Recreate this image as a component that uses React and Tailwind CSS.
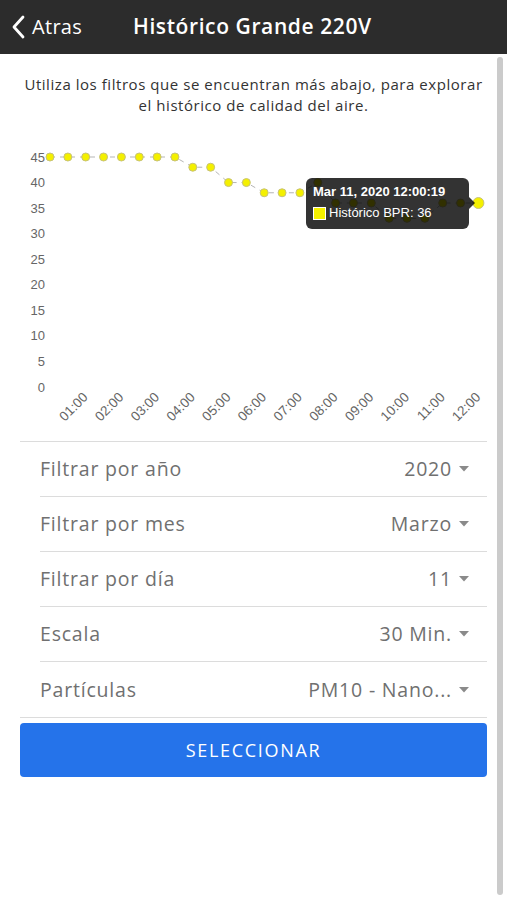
import React from "react";

const values = [45, 45, 45, 45, 45, 45, 45, 45, 43, 43, 40, 40, 38, 38, 38, 40, 36, 36, 36, 33, 33, 33, 36, 36, 36];
const hours = ["01:00", "02:00", "03:00", "04:00", "05:00", "06:00", "07:00", "08:00", "09:00", "10:00", "11:00", "12:00"];

const px = (i) => 50 + i * 17.85;
const py = (v) => 387 - v * (230 / 45);

const filters = [
  { label: "Filtrar por año", value: "2020" },
  { label: "Filtrar por mes", value: "Marzo" },
  { label: "Filtrar por día", value: "11" },
  { label: "Escala", value: "30 Min." },
  { label: "Partículas", value: "PM10 - Nano..." },
];

function Caret() {
  return (
    <svg width="10" height="6" viewBox="0 0 10 6" className="ml-[7px] shrink-0">
      <path d="M0 0 L10 0 L5 5.5 Z" fill="#8a8a8a" />
    </svg>
  );
}

function Chart() {
  const line = values.map((v, i) => `${i === 0 ? "M" : "L"}${px(i)} ${py(v)}`).join(" ");
  return (
    <div className="relative h-[290px]">
      <svg width="467" height="290" viewBox="20 140 467 290" style={{ fontFamily: '"Liberation Sans", Arial, sans-serif' }}>
        {[0, 5, 10, 15, 20, 25, 30, 35, 40, 45].map((t) => (
          <text key={t} x="45" y={py(t) + 4.5} textAnchor="end" fontSize="13" fill="#666">
            {t}
          </text>
        ))}
        <path d={line} fill="none" stroke="#b5b5b5" strokeWidth="1" strokeDasharray="5 5" />
        {values.map((v, i) => (
          <circle
            key={i}
            cx={px(i)}
            cy={py(v)}
            r={i === values.length - 1 ? 5.5 : 4}
            fill="#f4f000"
            stroke="#c7c27a"
            strokeWidth="1"
          />
        ))}
        {hours.map((h, k) => {
          const x = px(2 * (k + 1)) + 3;
          const y = 398;
          return (
            <text key={h} x={x} y={y} textAnchor="end" fontSize="13.5" fill="#666" transform={`rotate(-45 ${x} ${y})`}>
              {h}
            </text>
          );
        })}
      </svg>
      <div
        className="absolute left-[286px] top-[38px] w-[163px] h-[51px] rounded-[6px] bg-black/80 pl-[7px] pt-[5px] text-white"
        style={{ fontFamily: '"Liberation Sans", Arial, sans-serif' }}
      >
        <div className="text-[13px] font-bold leading-[18px]">Mar 11, 2020 12:00:19</div>
        <div className="flex items-center mt-[3px] text-[13px] leading-[18px]">
          <span className="w-[13px] h-[13px] bg-[#f4f000] border border-white mr-[3px]" />
          Histórico BPR: 36
        </div>
        <div className="absolute right-[-6px] top-[19px] w-0 h-0 border-y-[6px] border-y-transparent border-l-[6px] border-l-black/80" />
      </div>
    </div>
  );
}

export default function App() {
  return (
    <div className="relative w-[507px] h-[900px] bg-white overflow-hidden" style={{ fontFamily: '"Open Sans", sans-serif' }}>
      <header className="h-[54px] bg-[#2c2c2c] flex items-center text-white">
        <div className="flex items-center pl-[11px] w-[133px]">
          <svg width="14" height="24" viewBox="0 0 14 24">
            <path d="M12 2 L3 12 L12 22" fill="none" stroke="white" strokeWidth="2.8" strokeLinecap="round" strokeLinejoin="round" />
          </svg>
          <span className="ml-[7px] text-[20px] tracking-[0.3px] leading-none">Atras</span>
        </div>
        <h1 className="text-[21px] font-semibold tracking-[0.6px]">Histórico Grande 220V</h1>
      </header>

      <main className="px-5">
        <p className="pt-[20px] text-center text-[15px] leading-[21px] tracking-[0.55px] text-[#333]">
          Utiliza los filtros que se encuentran más abajo, para explorar
          <br />
          el histórico de calidad del aire.
        </p>

        <div className="mt-[24px]">
          <Chart />
        </div>

        <div className="mt-[11px] border-t border-[#dcdcdc]">
          {filters.map((f, i) => (
            <div key={f.label} className={`ml-5 h-[55px] flex items-center pr-[18px] ${i < filters.length - 1 ? "border-b border-[#dcdcdc]" : ""}`}>
              <span className="text-[19.5px] tracking-[0.8px] text-[#707070]">{f.label}</span>
              <span className="ml-auto text-[19.5px] tracking-[0.8px] text-[#707070]">{f.value}</span>
              <Caret />
            </div>
          ))}
        </div>
        <div className="border-t border-[#dcdcdc]" />

        <button className="mt-[5px] w-full h-[54px] rounded-[4px] bg-[#2573ea] text-white text-[18px] tracking-[1.7px] flex items-center justify-center">
          SELECCIONAR
        </button>
      </main>

      <div className="absolute right-[4px] top-[57px] w-[6px] h-[838px] rounded-full bg-[#cbcbcb]" />
    </div>
  );
}
